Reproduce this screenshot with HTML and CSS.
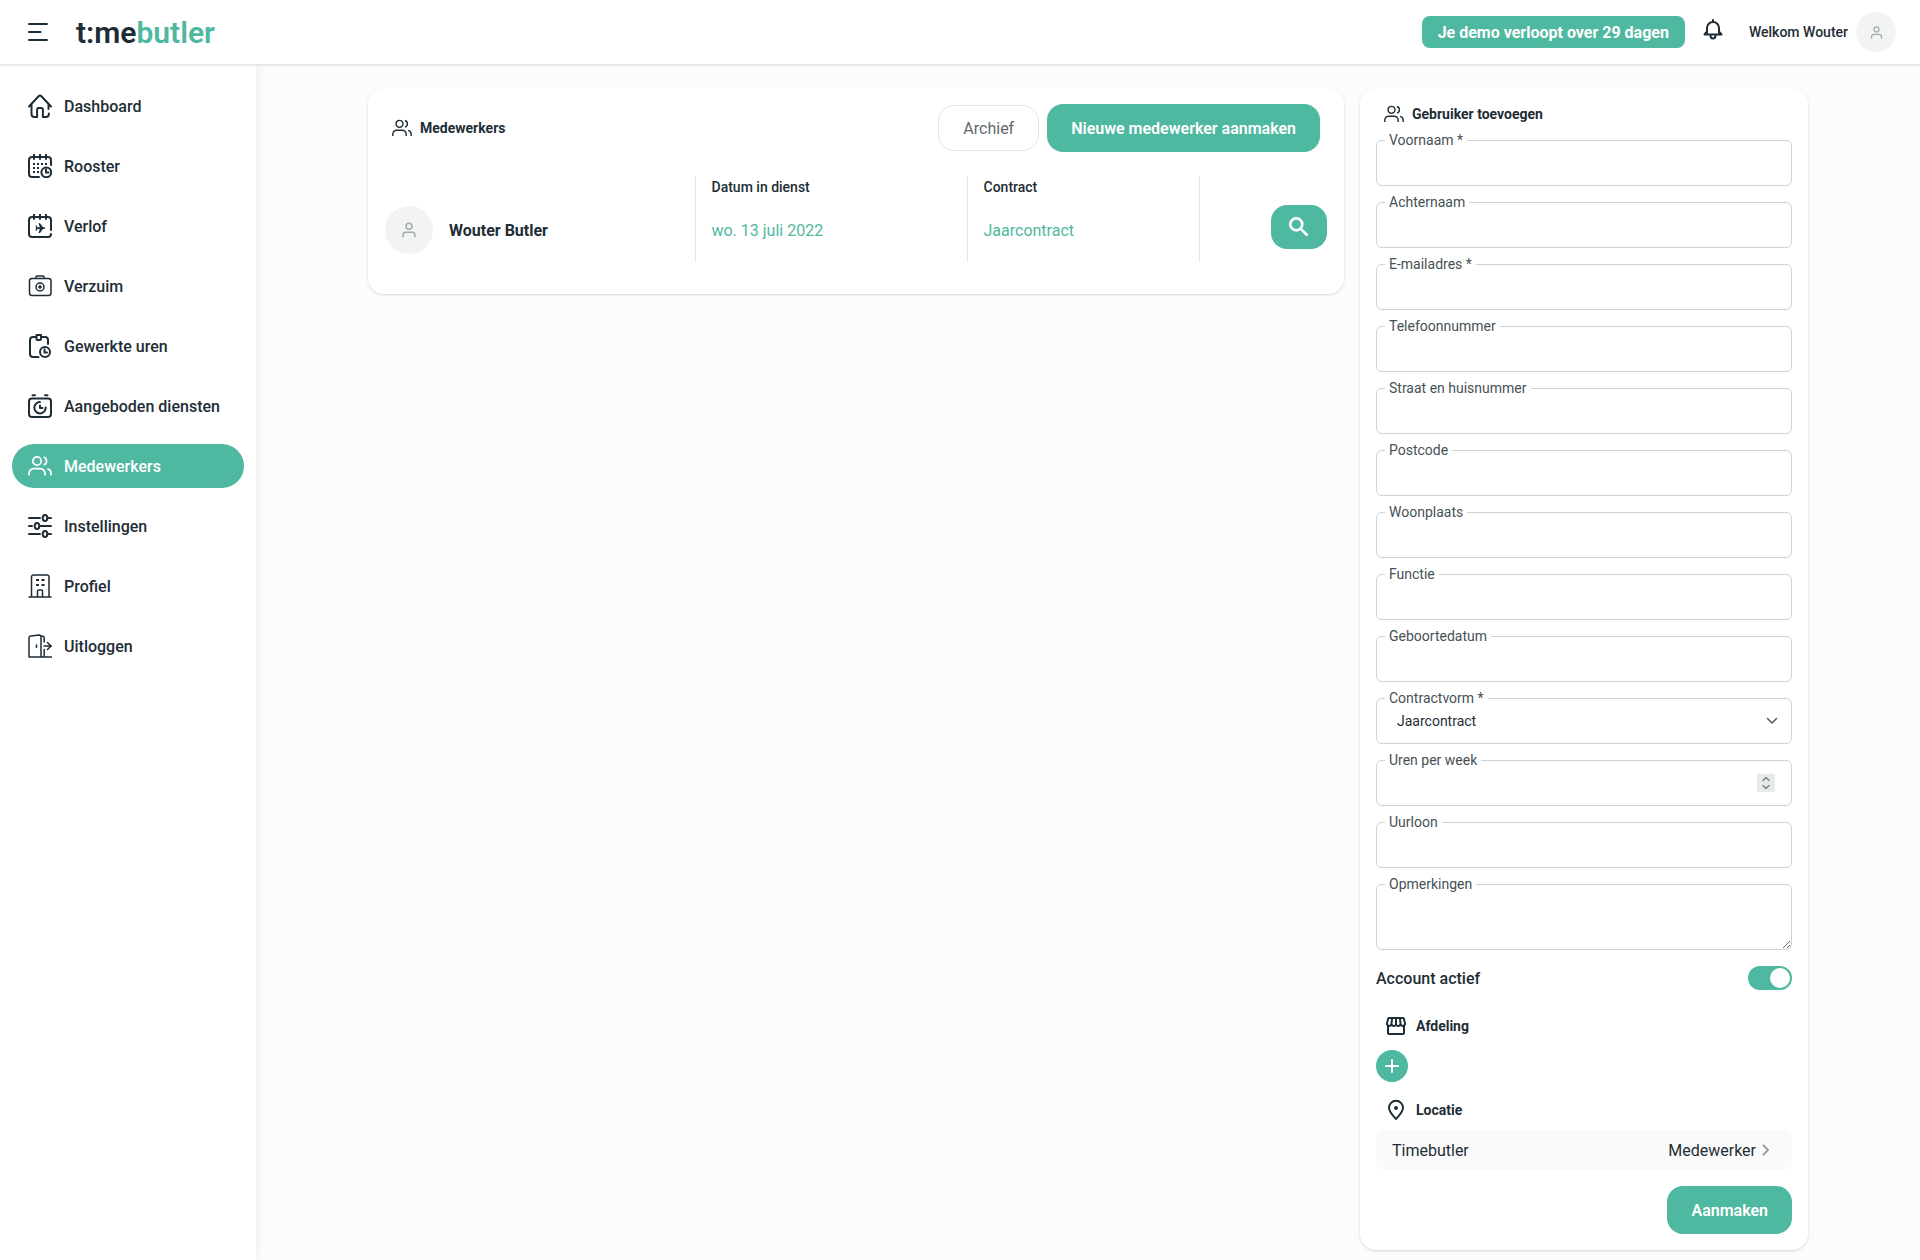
FILE: index.html
```html
<!DOCTYPE html>
<html lang="nl">
<head>
<meta charset="utf-8">
<meta name="viewport" content="width=device-width, initial-scale=1">
<title>Timebutler - Medewerkers</title>
<link rel="stylesheet" href="styles.css">
</head>
<body>
<svg class="sprite" aria-hidden="true">
  <symbol id="users" viewBox="0 0 24 24"><circle cx="9" cy="7" r="4.2"/><path d="M1 21.5v-2.2A4.6 4.6 0 0 1 5.6 14.7h6.8a4.6 4.6 0 0 1 4.6 4.6v2.2M15.6 3a4.2 4.2 0 0 1 0 8M19.4 14.8a4.6 4.6 0 0 1 3.6 4.5v2.2"/></symbol>
  <symbol id="user" viewBox="0 0 24 24"><circle cx="12" cy="7" r="4"/><path d="M4 21v-2a4 4 0 0 1 4-4h8a4 4 0 0 1 4 4v2"/></symbol>
</svg>
<header class="topbar">
  <button class="menu-button" type="button" aria-label="Menu">
    <svg class="icon" width="24" height="24" viewBox="0 0 24 24"><path d="M1 4h18M1 12h11.500M1 20h18"/></svg>
  </button>
  <a class="logo" href="#">t:me<span>butler</span></a>
  <button class="demo-button" type="button">Je demo verloopt over 29 dagen</button>
  <button class="bell-button" type="button" aria-label="Meldingen">
    <svg class="icon bell" width="24" height="24" viewBox="0 0 24 24"><path d="M4 16.500h16M6 16V10a6 6 0 0 1 12 0v6M6 13.500l-2.500 3h17l-2.500-3M12 3.500V2"/><path d="M9.500 17.500a2.500 3 0 0 0 5 0"/></svg>
  </button>
  <a class="account" href="#">Welkom Wouter<span class="avatar avatar-small"><svg class="icon" width="15" height="15"><use href="#user"/></svg></span></a>
</header>
<div class="shell">
  <nav class="sidebar">
    <a href="#"><svg class="icon" width="24" height="24" viewBox="0 0 24 24"><path d="M1 12.500L10.600 2.200a2 2 0 0 1 2.800 0L23 12.500M3.500 10.500V20a3 3 0 0 0 3 3h2.600v-7.500a1.500 1.500 0 0 1 1.500-1.500h2.800a1.500 1.500 0 0 1 1.500 1.500V23h3a3 3 0 0 0 3-3v-.5M20.500 10.500V15"/></svg>Dashboard</a>
    <a href="#"><svg class="icon" width="24" height="24" viewBox="0 0 24 24"><path d="M11 23H4a3 3 0 0 1-3-3V6a3 3 0 0 1 3-3h16a3 3 0 0 1 3 3v5M6 .500V5M12 .500V5M18 .500V5"/><circle cx="18.300" cy="18.300" r="4.900"/><path d="M18 15.500v3h2.500"/><path class="dots" d="M5 10h2M9 10h2M13 10h2M17 10h2M5 14h2M9 14h2M5 18h2M9 18h2"/></svg>Rooster</a>
    <a href="#"><svg class="icon" width="24" height="24" viewBox="0 0 24 24"><path d="M23 16V6a3 3 0 0 0-3-3H4a3 3 0 0 0-3 3v14a3 3 0 0 0 3 3h16a3 3 0 0 0 3-3M6 .500V5M12 .500V5M18 .500V5"/><path class="solid" d="M7.500 11.500h1l1 1.700h2.300L10.500 9.200h1.500l3 4h1.200a.9.900 0 0 1 0 1.800H15l-3 4h-1.500l1.300-4H9.500l-1 1.700h-1l.6-2.600z"/></svg>Verlof</a>
    <a href="#"><svg class="icon thin" width="24" height="24" viewBox="0 0 24 24"><rect x="1.500" y="4.500" width="21.500" height="17" rx="2.500"/><path d="M8 4V3a1 1 0 0 1 1-1h6a1 1 0 0 1 1 1v1M12 11.500v3M10.500 13h3"/><circle cx="12" cy="13" r="4"/></svg>Verzuim</a>
    <a href="#"><svg class="icon" width="24" height="24" viewBox="0 0 24 24"><path d="M10.500 23H5a3 3 0 0 1-3-3V6a3 3 0 0 1 3-3h3M14 3h3a3 3 0 0 1 3 3v4M8.500 1h4.500v4a1 1 0 0 1-1 1H9.500a1 1 0 0 1-1-1z"/><circle cx="17" cy="18" r="5"/><path d="M16.500 15.500v3h2.500"/></svg>Gewerkte uren</a>
    <a href="#"><svg class="icon" width="24" height="24" viewBox="0 0 24 24"><rect x="1" y="4.500" width="22" height="18.500" rx="3"/><path d="M4.500 1.200h2.500M17 1.200h2.500M12 8a5.700 5.700 0 1 0 5.700 5.500M12 11.500v2.500h2.500"/></svg>Aangeboden diensten</a>
    <a class="active" href="#" aria-current="page"><svg class="icon users" width="24" height="24"><use href="#users"/></svg>Medewerkers</a>
    <a href="#"><svg class="icon" width="24" height="24" viewBox="0 0 24 24"><path d="M1 4h11M20 4h3M1 12h3M12 12h11M1 20h11M20 20h3"/><ellipse cx="17" cy="4" rx="2.300" ry="3"/><ellipse cx="9" cy="12" rx="2.300" ry="3"/><ellipse cx="17" cy="20" rx="2.300" ry="3"/></svg>Instellingen</a>
    <a href="#"><svg class="icon thin" width="24" height="24" viewBox="0 0 24 24"><path d="M1 23h22M3.500 23V3a2 2 0 0 1 2-2h13.500a2 2 0 0 1 2 2v20M9.500 23v-6a1 1 0 0 1 1-1h3a1 1 0 0 1 1 1v6"/><path class="dots" d="M8 6h3M13.500 6h3M8 11h3M13.500 11h3"/></svg>Profiel</a>
    <a href="#"><svg class="icon thin" width="24" height="24" viewBox="0 0 24 24"><path d="M23.500 23H1V4a2 2 0 0 1 1.800-2l8.200-1a2 2 0 0 1 2 2v20M13 2l2 .300a1.500 1.500 0 0 1 1.200 1.500V8M16.200 15.500V23M16 12h7.500M19.500 8.500L23 12l-3.500 3.500M8.500 11v2.500"/></svg>Uitloggen</a>
  </nav>
  <main class="content">
    <div class="columns">
      <section class="card employees">
        <div class="card-head">
          <h1 class="title"><svg class="icon users" width="20" height="20"><use href="#users"/></svg>Medewerkers</h1>
          <button class="button-outline" type="button">Archief</button>
          <button class="button" type="button">Nieuwe medewerker aanmaken</button>
        </div>
        <table class="table">
          <colgroup><col><col class="col-date"><col class="col-contract"><col class="col-actions"></colgroup>
          <thead><tr><th></th><th scope="col">Datum in dienst</th><th scope="col">Contract</th><th></th></tr></thead>
          <tbody><tr>
            <td><div class="person"><span class="avatar"><svg class="icon" width="18" height="18"><use href="#user"/></svg></span>Wouter Butler</div></td>
            <td>wo. 13 juli 2022</td>
            <td>Jaarcontract</td>
            <td class="actions"><button class="search-button" type="button" aria-label="Bekijken"><svg width="26" height="26" viewBox="0 0 24 24" fill="currentColor" stroke="currentColor" stroke-width=".5"><path d="M15.500 14h-.790l-.280-.270A6.471 6.471 0 0 0 16 9.500 6.500 6.500 0 1 0 9.500 16c1.610 0 3.090-.590 4.230-1.570l.270.280v.790l5 4.990L20.490 19l-4.990-5zm-6 0C7.010 14 5 11.990 5 9.500S7.010 5 9.500 5 14 7.010 14 9.500 11.990 14 9.500 14z"/></svg></button></td>
          </tr></tbody>
        </table>
      </section>
      <form class="card user-form">
        <h2 class="title"><svg class="icon users" width="20" height="20"><use href="#users"/></svg>Gebruiker toevoegen</h2>
        <div class="fields">
          <div class="field"><label for="f1">Voornaam *</label><input id="f1" type="text"></div>
          <div class="field"><label for="f2">Achternaam</label><input id="f2" type="text"></div>
          <div class="field"><label for="f3">E-mailadres *</label><input id="f3" type="email"></div>
          <div class="field"><label for="f4">Telefoonnummer</label><input id="f4" type="tel"></div>
          <div class="field"><label for="f5">Straat en huisnummer</label><input id="f5" type="text"></div>
          <div class="field"><label for="f6">Postcode</label><input id="f6" type="text"></div>
          <div class="field"><label for="f7">Woonplaats</label><input id="f7" type="text"></div>
          <div class="field"><label for="f8">Functie</label><input id="f8" type="text"></div>
          <div class="field"><label for="f9">Geboortedatum</label><input id="f9" type="text"></div>
          <div class="field"><label for="f10">Contractvorm *</label><select id="f10"><option>Jaarcontract</option></select><svg class="icon chevron" width="12" height="8" viewBox="0 0 12 8"><path d="M1.500 1.500L6 6l4.500-4.500"/></svg></div>
          <div class="field"><label for="f11">Uren per week</label><input id="f11" type="number"><svg class="icon spinner" width="18" height="18" viewBox="0 0 18 18"><path d="M6 6.500l3-3 3 3M6 11.500l3 3 3-3"/></svg></div>
          <div class="field"><label for="f12">Uurloon</label><input id="f12" type="text"></div>
          <div class="field"><label for="f13">Opmerkingen</label><textarea id="f13"></textarea></div>
        </div>
        <div class="switch-row"><label for="active">Account actief</label><input class="switch" id="active" type="checkbox" role="switch" checked></div>
        <h3 class="subtitle department"><svg width="24" height="24" viewBox="0 0 24 24" fill="currentColor"><path d="M21.900 8.890l-1.050-4.370c-.220-.900-1-1.520-1.910-1.520H5.050c-.900 0-1.690.630-1.900 1.520L2.100 8.890c-.240 1.020-.020 2.060.620 2.880.080.110.190.190.280.290V19c0 1.100.900 2 2 2h14c1.100 0 2-.900 2-2v-6.940c.090-.090.200-.180.280-.280.640-.820.870-1.870.620-2.890zm-2.990-3.900l1.050 4.370c.100.420.010.840-.250 1.170-.140.180-.440.470-.940.470-.610 0-1.140-.490-1.210-1.140L16.980 5l1.930-.010zM13 5h1.960l.540 4.520c.050.390-.070.780-.330 1.070-.220.260-.540.410-.950.410-.670 0-1.220-.590-1.220-1.310V5zM8.490 9.520L9.040 5H11v4.690c0 .720-.550 1.310-1.290 1.310-.340 0-.650-.150-.890-.410a1.420 1.420 0 0 1-.330-1.070zm-4.450-.160L5.050 5h1.970l-.580 4.860c-.080.650-.600 1.140-1.210 1.140-.490 0-.800-.290-.930-.470-.270-.320-.360-.750-.260-1.170zM5 19v-6.030c.080.010.150.030.230.030.870 0 1.660-.360 2.240-.950.600.600 1.400.950 2.310.950.870 0 1.650-.360 2.230-.930.590.570 1.390.930 2.290.930.840 0 1.640-.350 2.240-.950.580.590 1.370.950 2.240.950.080 0 .150-.020.230-.030V19H5z"/></svg>Afdeling</h3>
        <button class="add-button" type="button" aria-label="Afdeling toevoegen"><svg class="icon" width="16" height="16" viewBox="0 0 16 16"><path d="M8 2v12M2 8h12"/></svg></button>
        <h3 class="subtitle location"><svg class="icon" width="24" height="24" viewBox="0 0 24 24"><path d="M12 21c-2.500-2.600-7-7.200-7-11.200a7 7 0 0 1 14 0c0 4-4.500 8.600-7 11.200z"/><circle class="solid" cx="12" cy="10" r="2"/></svg>Locatie</h3>
        <button class="location-row" type="button"><span>Timebutler</span><span>Medewerker</span><svg class="icon" width="8" height="12" viewBox="0 0 8 12"><path d="M1.500 1.500L6 6l-4.500 4.500"/></svg></button>
        <button class="button submit" type="submit">Aanmaken</button>
      </form>
    </div>
  </main>
</div>
</body>
</html>
```
FILE: styles.css
```css
:root {
  --green: #4fb8a0;
  --ink: #1e2d35;
  --line: #e3e5e5;
  --shadow: 0 1px 3px rgba(30, 60, 55, 0.12), 0 1px 2px rgba(30, 60, 55, 0.06);
}

* { box-sizing: border-box; }

body {
  margin: 0;
  min-height: 100vh;
  display: flex;
  flex-direction: column;
  background: #fcfcfc;
  color: var(--ink);
  font: 16px/25px Roboto, sans-serif;
}

button, input, select, textarea { font: inherit; color: inherit; }
button { border: 0; padding: 0; background: none; cursor: pointer; }
a { color: inherit; text-decoration: none; }
h1, h2, h3 { margin: 0; }
svg { display: block; flex: none; }

.sprite { position: absolute; width: 0; height: 0; }
.icon { fill: none; stroke: currentColor; stroke-width: 2; stroke-linecap: round; stroke-linejoin: round; }
.icon.users { stroke-width: 1.7; stroke-linecap: butt; }
.thin { stroke-width: 1.5; }
.dots { stroke-linecap: butt; stroke-width: 2; }
.solid { fill: currentColor; stroke: none; }

.topbar {
  position: relative;
  z-index: 1;
  display: flex;
  align-items: center;
  height: 64px;
  padding: 0 24px 0 28px;
  background: #fff;
  box-shadow: var(--shadow);
}
.logo {
  margin: 0 auto 0 24px;
  font-size: 30px;
  line-height: 41px;
  font-weight: 600;
}
.logo span { color: var(--green); }
.demo-button {
  height: 32px;
  padding: 0 16px;
  border-radius: 8px;
  background: var(--green);
  color: #fff;
  font-weight: 700;
}
.bell-button { margin: 0 24px 4px 16px; }
.account {
  display: flex;
  align-items: center;
  gap: 8px;
  font-size: 14px;
  line-height: 24px;
  font-weight: 500;
}

.avatar {
  display: flex;
  flex: none;
  align-items: center;
  justify-content: center;
  width: 48px;
  height: 48px;
  border-radius: 50%;
  background: #f2f3f3;
  color: #a5abac;
}
.avatar-small { width: 40px; height: 40px; }

.shell { display: flex; flex: 1; }
.sidebar {
  display: flex;
  flex: none;
  flex-direction: column;
  gap: 16px;
  width: 256px;
  padding: 20px 12px;
  background: #fff;
  box-shadow: 2px 0 8px rgba(0, 0, 0, 0.05);
}
.sidebar a {
  display: flex;
  align-items: center;
  gap: 12px;
  height: 44px;
  padding: 0 16px;
  border-radius: 22px;
  font-weight: 500;
}
.sidebar .active { background: var(--green); color: #fff; }

.content { flex: 1; padding: 24px 24px 8px; }
.columns {
  display: grid;
  grid-template-columns: minmax(0, 1fr) 448px;
  align-items: start;
  gap: 16px;
  max-width: 1440px;
  margin: 0 auto;
}
.card { border-radius: 16px; background: #fff; box-shadow: var(--shadow); }
.employees { padding: 16px 17px 32px; }
.card-head { display: flex; align-items: center; gap: 8px; padding: 0 7px; margin-bottom: 24px; }
.title {
  display: flex;
  align-items: center;
  gap: 8px;
  font-size: 14px;
  line-height: 20px;
  font-weight: 700;
}
.card-head .title { margin-right: auto; }

.button {
  height: 48px;
  padding: 0 24px;
  border-radius: 16px;
  background: var(--green);
  color: #fff;
  font-weight: 600;
}
.button-outline {
  height: 46px;
  padding: 0 24px;
  border: 1px solid var(--line);
  border-radius: 16px;
  color: #62696c;
}

.table { width: 100%; table-layout: fixed; border-collapse: collapse; text-align: left; }
.col-date { width: 272px; }
.col-contract { width: 232px; }
.col-actions { width: 128px; }
.table th, .table td { padding: 0 16px; }
.table th { height: 22px; font-size: 14px; line-height: 22px; font-weight: 500; }
.table td { height: 64px; color: var(--green); }
.table tr > :first-child { padding-left: 0; }
.table tr > * + * { border-left: 1px solid var(--line); }
.person { display: flex; align-items: center; gap: 16px; color: var(--ink); font-weight: 700; }
.table .actions { padding: 7px 0; vertical-align: top; }
.search-button {
  display: flex;
  align-items: center;
  justify-content: center;
  width: 56px;
  height: 44px;
  margin-left: auto;
  border-radius: 16px;
  background: var(--green);
  color: #fff;
}

.user-form { display: flex; flex-direction: column; padding: 16px; }
.user-form .title { padding-left: 8px; margin-bottom: 16px; }
.fields { display: grid; gap: 16px; }
.field { position: relative; display: grid; }
.field label {
  position: absolute;
  top: -10px;
  left: 9px;
  padding: 0 4px;
  background: #fff;
  color: #465156;
  font-size: 14px;
  line-height: 20px;
}
.field input, .field select, .field textarea {
  width: 100%;
  min-width: 0;
  height: 46px;
  padding: 0 16px;
  border: 1px solid #cfd2d3;
  border-radius: 6px;
  background: #fff;
  font-size: 14px;
}
.field select { appearance: none; padding: 0 20px; }
.field textarea { height: 66px; padding: 12px 16px; resize: vertical; }
.field input::-webkit-inner-spin-button { width: 18px; opacity: 0; }
.chevron, .spinner { position: absolute; pointer-events: none; }
.chevron { top: 19px; right: 14px; color: #4f5b60; stroke-width: 1.5; }
.spinner { top: 14px; right: 17px; background: #e8eaea; color: #7d8485; stroke-width: 1.5; }

.switch-row {
  display: flex;
  align-items: center;
  justify-content: space-between;
  height: 24px;
  margin-top: 16px;
  font-weight: 500;
}
.switch {
  appearance: none;
  display: flex;
  width: 44px;
  height: 24px;
  margin: 0;
  padding: 2px;
  border-radius: 12px;
  background: #cfd2d3;
}
.switch::before { content: ""; width: 20px; height: 20px; border-radius: 50%; background: #fff; }
.switch:checked { justify-content: flex-end; background: var(--green); }

.subtitle {
  display: flex;
  align-items: center;
  gap: 8px;
  padding-left: 8px;
  font-size: 14px;
  line-height: 24px;
  font-weight: 700;
}
.department { margin: 24px 0 12px; }
.location { margin: 16px 0 8px; }
.add-button {
  display: flex;
  align-items: center;
  justify-content: center;
  width: 32px;
  height: 32px;
  border-radius: 50%;
  background: var(--green);
  color: #fff;
}
.location-row {
  display: flex;
  align-items: center;
  gap: 6px;
  height: 40px;
  padding: 0 22px 0 16px;
  border-radius: 8px;
  background: #fafafa;
}
.location-row span:first-child { margin-right: auto; }
.location-row .icon { color: #9a9fa1; }
.submit { align-self: flex-end; margin-top: 16px; }
```
